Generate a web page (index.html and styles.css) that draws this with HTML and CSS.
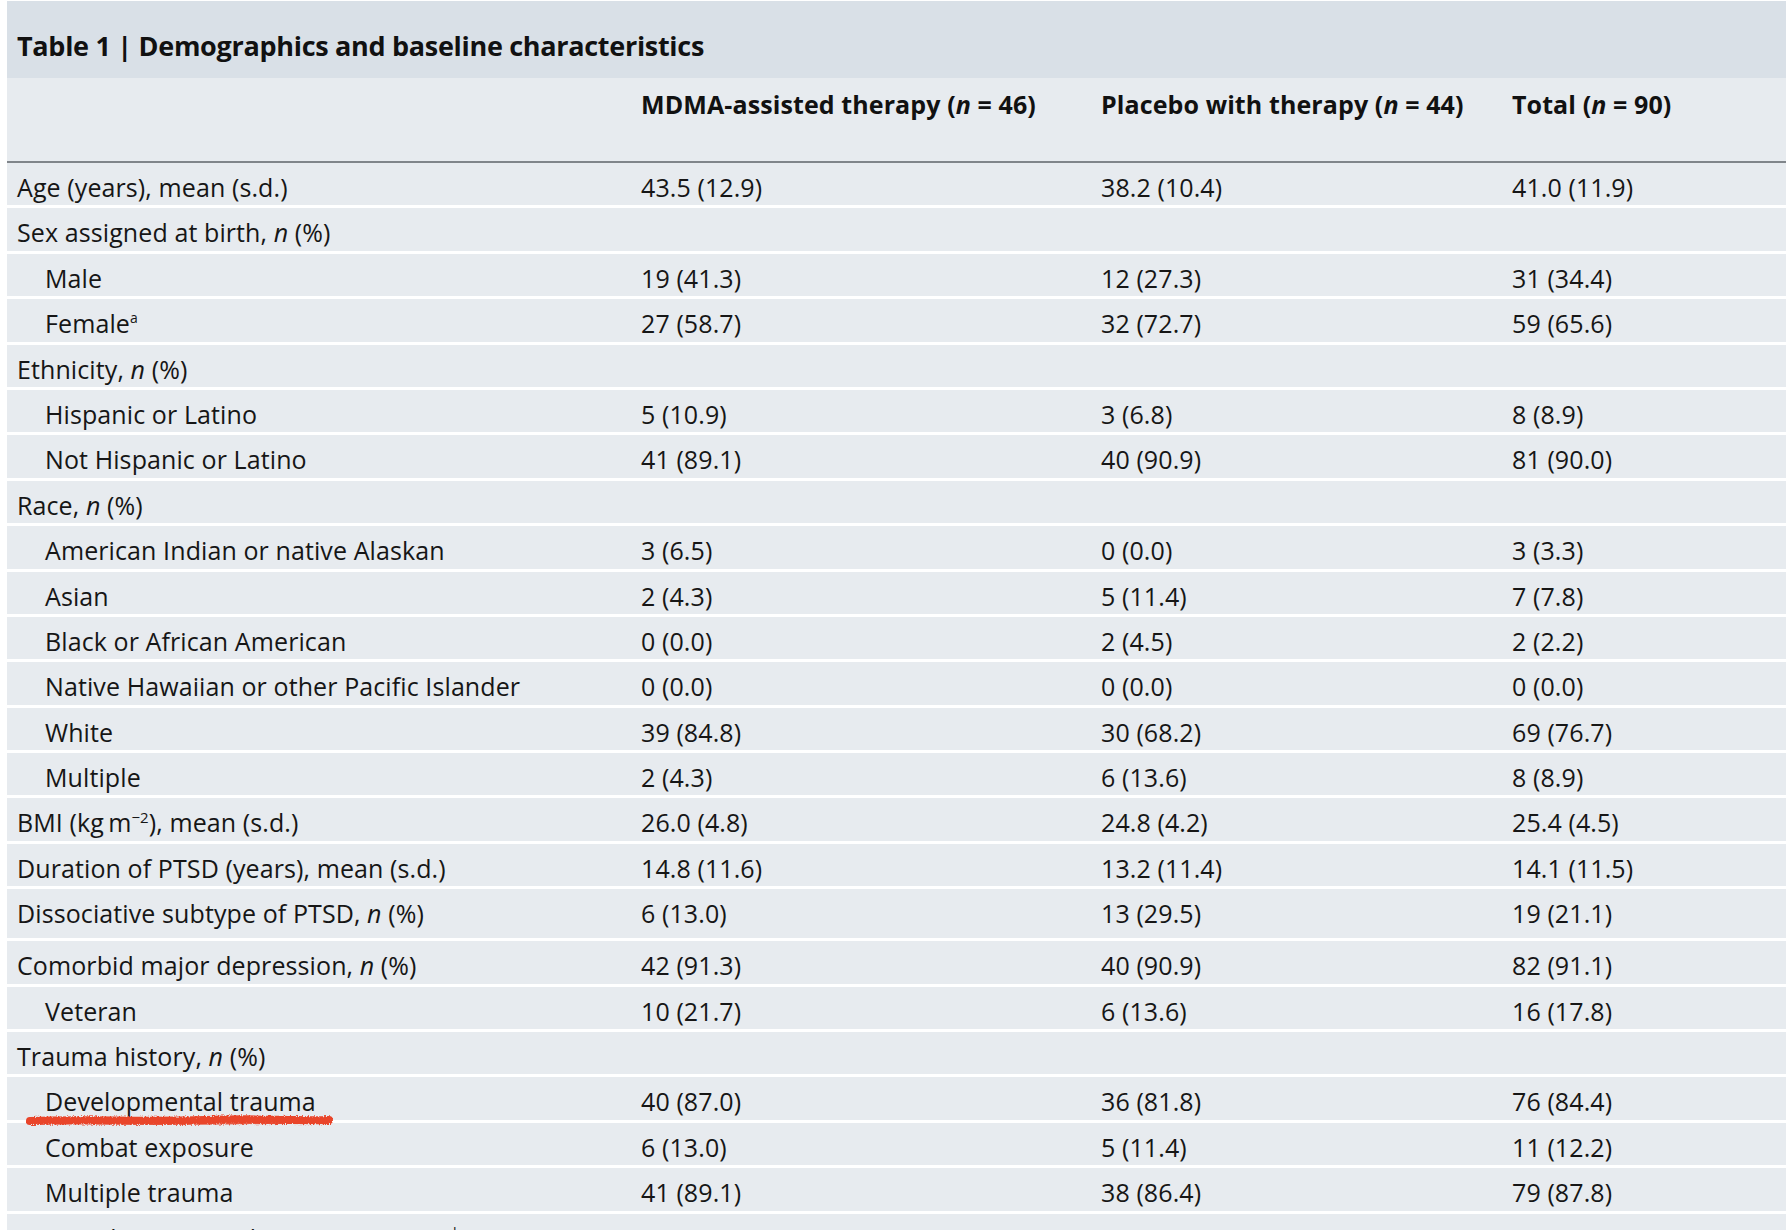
FILE: index.html
```html
<!DOCTYPE html>
<html lang="en">
<head>
<meta charset="utf-8">
<title>Table 1 | Demographics and baseline characteristics</title>
<link rel="stylesheet" href="styles.css">
</head>
<body>
<div class="sheet">
  <div class="caption"><span class="caption-num">Table 1 |</span> Demographics and baseline characteristics</div>
  <table class="demo">
    <colgroup>
      <col class="c-label">
      <col class="c-mdma">
      <col class="c-placebo">
      <col class="c-total">
    </colgroup>
    <thead>
      <tr>
        <th></th>
        <th>MDMA-assisted therapy (<i>n</i> = 46)</th>
        <th>Placebo with therapy (<i>n</i> = 44)</th>
        <th>Total (<i>n</i> = 90)</th>
      </tr>
    </thead>
    <tbody>
      <tr><td>Age (years), mean (s.d.)</td><td>43.5 (12.9)</td><td>38.2 (10.4)</td><td>41.0 (11.9)</td></tr>
      <tr><td>Sex assigned at birth, <i>n</i> (%)</td><td></td><td></td><td></td></tr>
      <tr><td class="sub">Male</td><td>19 (41.3)</td><td>12 (27.3)</td><td>31 (34.4)</td></tr>
      <tr><td class="sub">Female<sup class="fn">a</sup></td><td>27 (58.7)</td><td>32 (72.7)</td><td>59 (65.6)</td></tr>
      <tr><td>Ethnicity, <i>n</i> (%)</td><td></td><td></td><td></td></tr>
      <tr><td class="sub">Hispanic or Latino</td><td>5 (10.9)</td><td>3 (6.8)</td><td>8 (8.9)</td></tr>
      <tr><td class="sub">Not Hispanic or Latino</td><td>41 (89.1)</td><td>40 (90.9)</td><td>81 (90.0)</td></tr>
      <tr><td>Race, <i>n</i> (%)</td><td></td><td></td><td></td></tr>
      <tr><td class="sub">American Indian or native Alaskan</td><td>3 (6.5)</td><td>0 (0.0)</td><td>3 (3.3)</td></tr>
      <tr><td class="sub">Asian</td><td>2 (4.3)</td><td>5 (11.4)</td><td>7 (7.8)</td></tr>
      <tr><td class="sub">Black or African American</td><td>0 (0.0)</td><td>2 (4.5)</td><td>2 (2.2)</td></tr>
      <tr><td class="sub">Native Hawaiian or other Pacific Islander</td><td>0 (0.0)</td><td>0 (0.0)</td><td>0 (0.0)</td></tr>
      <tr><td class="sub">White</td><td>39 (84.8)</td><td>30 (68.2)</td><td>69 (76.7)</td></tr>
      <tr><td class="sub">Multiple</td><td>2 (4.3)</td><td>6 (13.6)</td><td>8 (8.9)</td></tr>
      <tr><td>BMI (kg&#8201;m<sup class="exp">&minus;2</sup>), mean (s.d.)</td><td>26.0 (4.8)</td><td>24.8 (4.2)</td><td>25.4 (4.5)</td></tr>
      <tr><td>Duration of PTSD (years), mean (s.d.)</td><td>14.8 (11.6)</td><td>13.2 (11.4)</td><td>14.1 (11.5)</td></tr>
      <tr class="tall"><td>Dissociative subtype of PTSD, <i>n</i> (%)</td><td>6 (13.0)</td><td>13 (29.5)</td><td>19 (21.1)</td></tr>
      <tr><td>Comorbid major depression, <i>n</i> (%)</td><td>42 (91.3)</td><td>40 (90.9)</td><td>82 (91.1)</td></tr>
      <tr><td class="sub">Veteran</td><td>10 (21.7)</td><td>6 (13.6)</td><td>16 (17.8)</td></tr>
      <tr><td>Trauma history, <i>n</i> (%)</td><td></td><td></td><td></td></tr>
      <tr><td class="sub"><span class="marked">Developmental trauma<svg class="scribble" viewBox="0 0 310 20" width="310" height="20" aria-hidden="true"><defs><filter id="rough" filterUnits="userSpaceOnUse" x="0" y="0" width="310" height="20"><feTurbulence type="fractalNoise" baseFrequency="0.7" numOctaves="2" seed="7" result="n"/><feDisplacementMap in="SourceGraphic" in2="n" scale="4"/></filter></defs><g filter="url(#rough)" fill="none" stroke="#e9452b" stroke-linecap="round"><path d="M5 10 C60 8 120 11 180 9 S262 10 304 9" stroke-width="8"/><path d="M8 11 C70 10 140 12 200 11 S272 11 300 10" stroke-width="5" stroke-opacity="0.8"/></g></svg></span></td><td>40 (87.0)</td><td>36 (81.8)</td><td>76 (84.4)</td></tr>
      <tr><td class="sub">Combat exposure</td><td>6 (13.0)</td><td>5 (11.4)</td><td>11 (12.2)</td></tr>
      <tr><td class="sub">Multiple trauma</td><td>41 (89.1)</td><td>38 (86.4)</td><td>79 (87.8)</td></tr>
      <tr><td>Pre-study PTSD medication use, <i>n</i> (%)<sup class="fn">b</sup></td><td></td><td></td><td></td></tr>
    </tbody>
  </table>
</div>
</body>
</html>
```

FILE: styles.css
```css
html, body {
  margin: 0;
  padding: 0;
  background: #ffffff;
}

body {
  font-family: "Open Sans", "Noto Sans", "Liberation Sans", sans-serif;
  color: #161616;
  overflow: hidden;
}

.sheet {
  margin: 1px 2px 0 7px;
  width: 1779px;
}

.caption {
  background: #d9e0e7;
  height: 77px;
  box-sizing: border-box;
  padding: 29px 0 0 10px;
  font-size: 27px;
  line-height: 32px;
  font-weight: 700;
  letter-spacing: -0.3px;
  color: #111;
}

.demo {
  width: 1779px;
  table-layout: fixed;
  border-collapse: collapse;
  background: #e7ebef;
}

.c-label { width: 634px; }
.c-mdma { width: 460px; }
.c-placebo { width: 411px; }
.c-total { width: 274px; }

.demo th {
  text-align: left;
  vertical-align: top;
  font-weight: 700;
  font-size: 25px;
  letter-spacing: 0.1px;
  line-height: 30px;
  padding: 11px 0 42px 0;
  border-bottom: 2px solid #80858a;
  color: #111;
  white-space: nowrap;
}

.demo td {
  vertical-align: top;
  font-size: 25px;
  letter-spacing: 0.1px;
  line-height: 30px;
  padding: 9px 0 3.4px 0;
  border-bottom: 3px solid #ffffff;
  white-space: nowrap;
}

.demo td:first-child {
  padding-left: 10px;
}

.demo td.sub {
  padding-left: 38px;
}

.demo tr.tall td {
  padding-bottom: 10px;
}

.fn {
  font-size: 14px;
  line-height: 0;
  vertical-align: 10px;
}

.exp {
  font-size: 15px;
  line-height: 0;
  vertical-align: 9px;
}

.marked {
  position: relative;
  display: inline-block;
}

.scribble {
  position: absolute;
  left: -20px;
  top: 25px;
}
```
